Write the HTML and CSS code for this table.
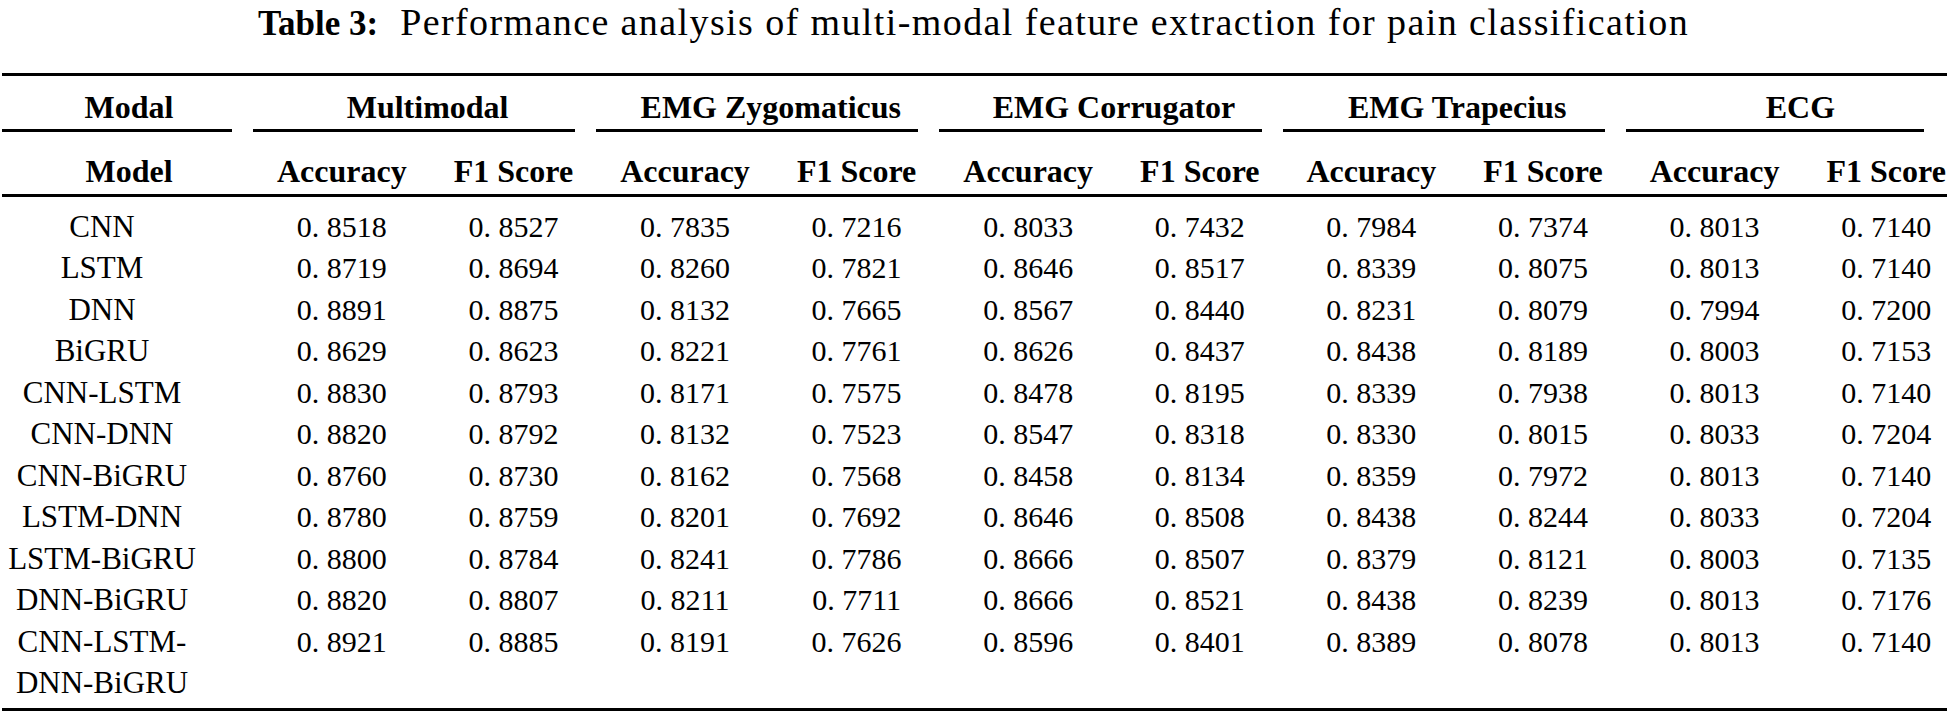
FILE: index.html
```html
<!DOCTYPE html>
<html lang="en">
<head>
<meta charset="utf-8">
<title>Table 3</title>
<link rel="stylesheet" href="styles.css">
</head>
<body>
<div class="page">
  <h1 class="caption"><span class="caption-label">Table 3:</span><span class="caption-text">Performance analysis of multi-modal feature extraction for pain classification</span></h1>
  <div class="table">
    <div class="row head groups">
      <div class="cell"><div class="htext">Modal</div><div class="cmid first"></div></div>
      <div class="cell span2"><div class="htext">Multimodal</div><div class="cmid"></div></div>
      <div class="cell span2"><div class="htext">EMG Zygomaticus</div><div class="cmid"></div></div>
      <div class="cell span2"><div class="htext">EMG Corrugator</div><div class="cmid"></div></div>
      <div class="cell span2"><div class="htext">EMG Trapecius</div><div class="cmid"></div></div>
      <div class="cell span2"><div class="htext">ECG</div><div class="cmid last"></div></div>
    </div>
    <div class="row head subs">
      <div class="cell">Model</div>
      <div class="cell">Accuracy</div><div class="cell">F1 Score</div>
      <div class="cell">Accuracy</div><div class="cell">F1 Score</div>
      <div class="cell">Accuracy</div><div class="cell">F1 Score</div>
      <div class="cell">Accuracy</div><div class="cell">F1 Score</div>
      <div class="cell">Accuracy</div><div class="cell">F1 Score</div>
    </div>
    <div class="tbody">
      <div class="row"><div class="label">CNN</div><div class="num">0. 8518</div><div class="num">0. 8527</div><div class="num">0. 7835</div><div class="num">0. 7216</div><div class="num">0. 8033</div><div class="num">0. 7432</div><div class="num">0. 7984</div><div class="num">0. 7374</div><div class="num">0. 8013</div><div class="num">0. 7140</div></div>
      <div class="row"><div class="label">LSTM</div><div class="num">0. 8719</div><div class="num">0. 8694</div><div class="num">0. 8260</div><div class="num">0. 7821</div><div class="num">0. 8646</div><div class="num">0. 8517</div><div class="num">0. 8339</div><div class="num">0. 8075</div><div class="num">0. 8013</div><div class="num">0. 7140</div></div>
      <div class="row"><div class="label">DNN</div><div class="num">0. 8891</div><div class="num">0. 8875</div><div class="num">0. 8132</div><div class="num">0. 7665</div><div class="num">0. 8567</div><div class="num">0. 8440</div><div class="num">0. 8231</div><div class="num">0. 8079</div><div class="num">0. 7994</div><div class="num">0. 7200</div></div>
      <div class="row"><div class="label">BiGRU</div><div class="num">0. 8629</div><div class="num">0. 8623</div><div class="num">0. 8221</div><div class="num">0. 7761</div><div class="num">0. 8626</div><div class="num">0. 8437</div><div class="num">0. 8438</div><div class="num">0. 8189</div><div class="num">0. 8003</div><div class="num">0. 7153</div></div>
      <div class="row"><div class="label">CNN-LSTM</div><div class="num">0. 8830</div><div class="num">0. 8793</div><div class="num">0. 8171</div><div class="num">0. 7575</div><div class="num">0. 8478</div><div class="num">0. 8195</div><div class="num">0. 8339</div><div class="num">0. 7938</div><div class="num">0. 8013</div><div class="num">0. 7140</div></div>
      <div class="row"><div class="label">CNN-DNN</div><div class="num">0. 8820</div><div class="num">0. 8792</div><div class="num">0. 8132</div><div class="num">0. 7523</div><div class="num">0. 8547</div><div class="num">0. 8318</div><div class="num">0. 8330</div><div class="num">0. 8015</div><div class="num">0. 8033</div><div class="num">0. 7204</div></div>
      <div class="row"><div class="label">CNN-BiGRU</div><div class="num">0. 8760</div><div class="num">0. 8730</div><div class="num">0. 8162</div><div class="num">0. 7568</div><div class="num">0. 8458</div><div class="num">0. 8134</div><div class="num">0. 8359</div><div class="num">0. 7972</div><div class="num">0. 8013</div><div class="num">0. 7140</div></div>
      <div class="row"><div class="label">LSTM-DNN</div><div class="num">0. 8780</div><div class="num">0. 8759</div><div class="num">0. 8201</div><div class="num">0. 7692</div><div class="num">0. 8646</div><div class="num">0. 8508</div><div class="num">0. 8438</div><div class="num">0. 8244</div><div class="num">0. 8033</div><div class="num">0. 7204</div></div>
      <div class="row"><div class="label">LSTM-BiGRU</div><div class="num">0. 8800</div><div class="num">0. 8784</div><div class="num">0. 8241</div><div class="num">0. 7786</div><div class="num">0. 8666</div><div class="num">0. 8507</div><div class="num">0. 8379</div><div class="num">0. 8121</div><div class="num">0. 8003</div><div class="num">0. 7135</div></div>
      <div class="row"><div class="label">DNN-BiGRU</div><div class="num">0. 8820</div><div class="num">0. 8807</div><div class="num">0. 8211</div><div class="num">0. 7711</div><div class="num">0. 8666</div><div class="num">0. 8521</div><div class="num">0. 8438</div><div class="num">0. 8239</div><div class="num">0. 8013</div><div class="num">0. 7176</div></div>
      <div class="row"><div class="label">CNN-LSTM-DNN-BiGRU</div><div class="num">0. 8921</div><div class="num">0. 8885</div><div class="num">0. 8191</div><div class="num">0. 7626</div><div class="num">0. 8596</div><div class="num">0. 8401</div><div class="num">0. 8389</div><div class="num">0. 8078</div><div class="num">0. 8013</div><div class="num">0. 7140</div></div>
    </div>
  </div>
</div>
</body>
</html>
```

FILE: styles.css
```css
html, body {
  margin: 0;
  padding: 0;
  background: #ffffff;
  overflow: hidden;
}

body {
  width: 1947px;
  height: 714px;
  font-family: "Liberation Serif", "Times New Roman", serif;
  color: #000000;
}

.page {
  width: 1947px;
  height: 714px;
  overflow: hidden;
}

.caption {
  margin: 0;
  height: 73px;
  box-sizing: border-box;
  padding-top: 0;
  text-align: center;
  font-weight: normal;
  font-size: 38px;
  line-height: 44px;
  white-space: nowrap;
}

.caption-label {
  font-weight: bold;
  font-size: 35px;
  margin-right: 22px;
}

.caption-text {
  letter-spacing: 1.4px;
}

.table {
  margin-left: 2px;
  width: 1970px;
  border-top: 3px solid #000;
  border-bottom: 3px solid #000;
}

.row {
  display: grid;
  grid-template-columns: 254px repeat(10, 171.6px);
}

.head {
  font-weight: bold;
  font-size: 32px;
  line-height: 38px;
  text-align: center;
}

.groups .cell {
  padding-top: 12px;
}

.span2 {
  grid-column: span 2;
}

.cmid {
  border-top: 3px solid #000;
  margin: 3px 24px 0 -3px;
}

.cmid.first {
  margin-left: 0;
}

.cmid.last {
  margin-right: 48px;
}

.subs {
  padding-top: 20px;
  padding-bottom: 4px;
  border-bottom: 3px solid #000;
}

.tbody {
  padding: 8.5px 0 4px;
  font-size: 31px;
  line-height: 41.5px;
}

.label {
  width: 200px;
  text-align: center;
}

.num {
  text-align: center;
  font-size: 30px;
}
```
